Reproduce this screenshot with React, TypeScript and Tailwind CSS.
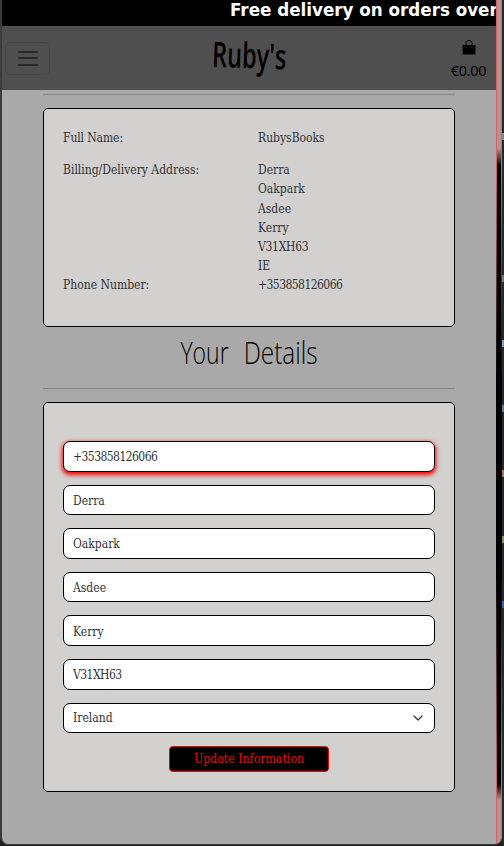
import React from "react";

const address = ["Derra", "Oakpark", "Asdee", "Kerry", "V31XH63", "IE"];
const fields = ["+353858126066", "Derra", "Oakpark", "Asdee", "Kerry", "V31XH63"];
const spacing = (value: string) => (/\d/.test(value) ? "tracking-[-0.55px]" : "tracking-[0px]");

export default function App() {
  return (
    <div className="relative h-[846px] w-[504px] overflow-hidden bg-[#1d1e20] font-['DejaVu_Serif_Condensed','DejaVu_Serif',serif] text-[12px] text-[#303336]">
      <div className="flex h-[845px] w-[502px] overflow-hidden rounded-b-[8px] border-b border-l-2 border-[#3c3c3e] bg-[#a9a9a9]">
        <div className="w-[494px] shrink-0 overflow-hidden">
          <div className="h-[26px] overflow-hidden bg-black pl-[228px] font-['DejaVu_Sans',sans-serif] text-[17px] font-bold leading-[21px] text-white">
            <div className="w-[266px] origin-left scale-x-[0.985] whitespace-nowrap">Free delivery on orders over</div>
          </div>
          <nav className="flex h-[64px] items-center justify-between bg-[#4f4f4f] pl-[3px] pr-[9px]">
            <button className="flex h-[33px] w-[45px] flex-col items-center justify-center gap-[4.5px] rounded-[5px] border border-[#464646]">
              <span className="h-[2px] w-[20px] rounded bg-[#292929]" />
              <span className="h-[2px] w-[20px] rounded bg-[#292929]" />
              <span className="h-[2px] w-[20px] rounded bg-[#292929]" />
            </button>
            <div className="ml-[-2px] flex h-[64px] w-[72px] items-center justify-center pb-[7px] font-['Open_Sans',sans-serif] text-[35px] font-semibold leading-none text-black">
              <span className="inline-block shrink-0 rotate-2 scale-x-[0.67] whitespace-nowrap">Ruby's</span>
            </div>
            <div className="flex w-[37px] flex-col items-center text-black">
              <svg className="mt-[5px] h-[15px] w-[14px]" viewBox="0 0 14 15">
                <path d="M4 5V3.5C4 1.7 5.2.6 7 .6s3 1.1 3 2.9V5" fill="none" stroke="black" />
                <path d="M.5 5h13v8c0 1-.6 1.6-1.6 1.6H2.1C1.1 14.6.5 14 .5 13z" fill="black" />
                <circle cx="4" cy="7" r=".6" fill="#555" />
                <circle cx="10" cy="7" r=".6" fill="#555" />
              </svg>
              <span className="mt-[3px] whitespace-nowrap font-['Noto_Sans',sans-serif] text-[14.5px] leading-[24px] tracking-[-0.35px]">€0.00</span>
            </div>
          </nav>
          <main className="px-[41px] pt-[4px]">
            <hr className="mb-[13px] border-[#858585]" />
            <section className="h-[219px] rounded-[5px] border border-black bg-[#d2d1cf] px-[19px] pt-[20px] leading-[19.2px]">
              <div className="flex">
                <div className="w-[195px] tracking-[-0.1px]">Full Name:</div>
                <div>RubysBooks</div>
              </div>
              <div className="mt-[13px] flex">
                <div className="w-[195px]">Billing/Delivery Address:</div>
                <div>
                  {address.map((line) => (
                    <div key={line} className={/\d/.test(line) ? "tracking-[-0.3px]" : "tracking-[0px]"}>{line}</div>
                  ))}
                </div>
              </div>
              <div className="flex">
                <div className="w-[195px]">Phone Number:</div>
                <div className="tracking-[-0.55px]">+353858126066</div>
              </div>
            </section>
            <h2 className="flex h-[61px] items-start justify-center pt-[6px] font-['Open_Sans',sans-serif] text-[32px] font-light leading-[38px] text-black">
              <span className="flex w-[49px] justify-center">
                <span className="inline-block shrink-0 scale-x-[0.72]">Your</span>
              </span>
              <span className="ml-[15px] flex w-[74px] justify-center">
                <span className="inline-block shrink-0 scale-x-[0.76]">Details</span>
              </span>
            </h2>
            <hr className="mb-[13px] border-[#858585]" />
            <section className="flex h-[390px] flex-col rounded-[5px] border border-black bg-[#d2d1cf] px-[19px] pt-[38px]">
              <div className="flex flex-col gap-[13px]">
                {fields.map((value, i) => (
                  <div
                    key={value}
                    className={
                      "flex h-[30.6px] items-center rounded-[7px] border border-black bg-white px-[9px] pt-[2px] " +
                      spacing(value) +
                      (i === 0 ? " shadow-[0_2px_4px_1px_#ff0000]" : "")
                    }
                  >
                    {value}
                  </div>
                ))}
                <div className="flex h-[30.6px] items-center justify-between rounded-[7px] border border-black bg-white pl-[9px] pr-[11px]">
                  <span>Ireland</span>
                  <svg className="h-[10px] w-[10px]" viewBox="0 0 10 10" fill="none" stroke="#343a40" strokeWidth="1.3" strokeLinecap="round" strokeLinejoin="round">
                    <path d="M1 3l4 4 4-4" />
                  </svg>
                </div>
              </div>
              <button className="mt-[13px] h-[26px] w-[160px] self-center whitespace-nowrap rounded-[4px] border border-[#ff0000] bg-black text-[12px] tracking-[0.1px] text-[#ff0000]">
                Update Information
              </button>
            </section>
          </main>
        </div>
        <div className="h-full w-[6px] shrink-0 rounded-br-[7px] border-l border-r border-[#d26363] bg-[#b69292]">
          <div className="h-full bg-[linear-gradient(to_bottom,transparent_148px,black_166px,black_784px,transparent_800px)]" />
        </div>
      </div>
      <div className="absolute left-[496px] top-[148px] h-[650px] w-[6px] bg-[linear-gradient(to_bottom,transparent_20px,black_240px,black_420px,transparent_630px)]" />
      <div className="absolute right-0 top-0 flex h-full w-[2px] flex-col bg-[#27282a]">
        <span className="mt-[133px] h-[7px] bg-[#888]" />
        <span className="mt-[135px] h-[7px] bg-[#77776c]" />
        <span className="mt-[58px] h-[7px] bg-[#8797bd]" />
        <span className="mt-[58px] h-[7px] bg-[#607788]" />
        <span className="mt-[58px] h-[7px] bg-[#a27a69]" />
        <span className="mt-[59px] h-[7px] bg-[#8d8a60]" />
        <span className="mt-[58px] h-[7px] bg-[#3e6298]" />
      </div>
    </div>
  );
}
